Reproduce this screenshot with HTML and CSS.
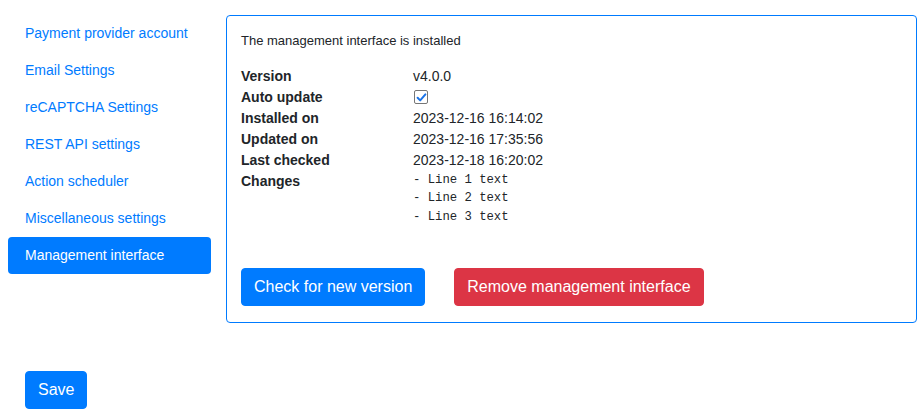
FILE: index.html
```html
<!DOCTYPE html>
<html>
<head>
<meta charset="utf-8">
<link rel="stylesheet" href="styles.css">
</head>
<body>
<div class="page">
  <div class="row">
    <nav class="side">
      <a class="nav-link">Payment provider account</a>
      <a class="nav-link">Email Settings</a>
      <a class="nav-link">reCAPTCHA Settings</a>
      <a class="nav-link">REST API settings</a>
      <a class="nav-link">Action scheduler</a>
      <a class="nav-link">Miscellaneous settings</a>
      <a class="nav-link active">Management interface</a>
    </nav>
    <section class="card">
      <p class="intro">The management interface is installed</p>
      <div class="info">
        <div class="label">Version</div><div class="value">v4.0.0</div>
        <div class="label">Auto update</div>
        <div class="value"><span class="check"><svg width="11" height="11" viewBox="0 0 11 11"><path d="M1.6 5.8 L4.2 8.4 L9.4 2.4" fill="none" stroke="#1a73e8" stroke-width="2" stroke-linecap="round" stroke-linejoin="round"/></svg></span></div>
        <div class="label">Installed on</div><div class="value">2023-12-16 16:14:02</div>
        <div class="label">Updated on</div><div class="value">2023-12-16 17:35:56</div>
        <div class="label">Last checked</div><div class="value">2023-12-18 16:20:02</div>
        <div class="label">Changes</div>
        <div class="value"><pre class="changes">- Line 1 text
- Line 2 text
- Line 3 text</pre></div>
      </div>
      <div class="actions">
        <button class="btn btn-primary">Check for new version</button>
        <button class="btn btn-danger">Remove management interface</button>
      </div>
    </section>
  </div>
  <div class="save-row">
    <button class="btn btn-primary">Save</button>
  </div>
</div>
</body>
</html>
```

FILE: styles.css
```css
html, body {
  margin: 0;
  padding: 0;
  background: #fff;
}
body {
  font-family: "Liberation Sans", Arial, sans-serif;
  font-size: 14px;
  line-height: 1.5;
  color: #212529;
}
.page {
  padding: 15px 5px 0 8px;
}
.row {
  display: flex;
  gap: 15px;
  align-items: flex-start;
}
.side {
  width: 203px;
  flex: none;
  display: flex;
  flex-direction: column;
}
.nav-link {
  display: block;
  padding: 8px 17px;
  color: #007bff;
  border-radius: 4px;
  height: 21px;
  white-space: nowrap;
}
.nav-link.active {
  background: #007bff;
  color: #fff;
}
.card {
  flex: 1;
  border: 1px solid #007bff;
  border-radius: 4px;
  padding: 15px 14px 16px 14px;
  height: 275px;
  box-sizing: content-box;
}
.intro {
  margin: 0 0 15px 0;
  font-size: 13px;
}
.info {
  display: grid;
  grid-template-columns: 172px 1fr;
  grid-auto-rows: minmax(21px, auto);
}
.label {
  font-weight: bold;
}
.value {
  display: flex;
  align-items: center;
}
.value:has(pre) {
  align-items: flex-start;
}
.check {
  display: inline-flex;
  align-items: center;
  justify-content: center;
  width: 12px;
  height: 12px;
  border: 1px solid #767676;
  border-radius: 2px;
  margin-left: 1px;
  background: #fff;
}
.changes {
  margin: 0;
  font-family: "Liberation Mono", "Courier New", monospace;
  font-size: 12.25px;
  line-height: 18.5px;
  padding-top: 0;
}
.actions {
  display: flex;
  gap: 29px;
  margin-top: 42px;
}
.btn {
  font-family: "Liberation Sans", Arial, sans-serif;
  font-size: 16px;
  line-height: 24px;
  padding: 6px 12px;
  border: 1px solid transparent;
  border-radius: 4px;
  color: #fff;
  cursor: pointer;
}
.btn-primary {
  background: #007bff;
  border-color: #007bff;
}
.btn-danger {
  background: #dc3545;
  border-color: #dc3545;
}
.save-row {
  padding: 48px 0 0 17px;
}
```
